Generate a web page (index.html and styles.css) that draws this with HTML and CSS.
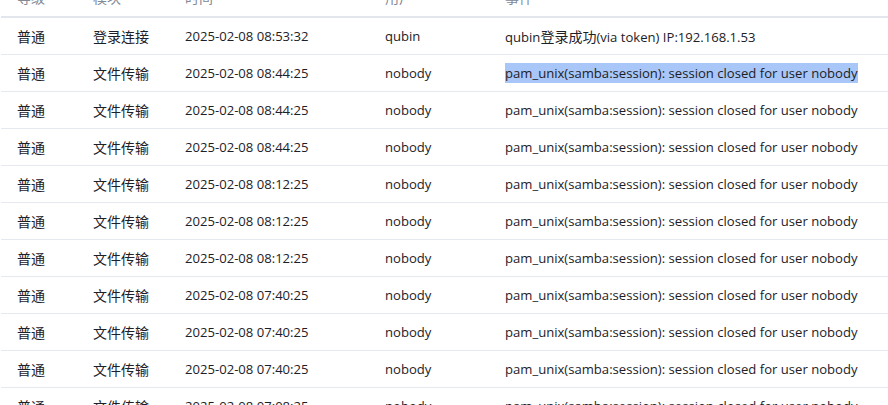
FILE: index.html
```html
<!DOCTYPE html>
<html>
<head>
<meta charset="utf-8">
<link rel="stylesheet" href="styles.css">
</head>
<body>
<div class="wrap">
<table class="log">
<colgroup><col class="c1"><col class="c2"><col class="c3"><col class="c4"><col class="c5"></colgroup>
<thead>
<tr><th><span class="h">等级</span></th><th><span class="h">模块</span></th><th><span class="h">时间</span></th><th><span class="h">用户</span></th><th><span class="h">事件</span></th></tr>
</thead>
<tbody>
<tr><td class="zh">普通</td><td class="zh">登录连接</td><td>2025-02-08 08:53:32</td><td>qubin</td><td>qubin<span class="zh">登录成功</span>(via token) IP:192.168.1.53</td></tr>
<tr><td class="zh">普通</td><td class="zh">文件传输</td><td>2025-02-08 08:44:25</td><td>nobody</td><td><span class="sel">pam_unix(samba:session): session closed for user nobody</span></td></tr>
<tr><td class="zh">普通</td><td class="zh">文件传输</td><td>2025-02-08 08:44:25</td><td>nobody</td><td>pam_unix(samba:session): session closed for user nobody</td></tr>
<tr><td class="zh">普通</td><td class="zh">文件传输</td><td>2025-02-08 08:44:25</td><td>nobody</td><td>pam_unix(samba:session): session closed for user nobody</td></tr>
<tr><td class="zh">普通</td><td class="zh">文件传输</td><td>2025-02-08 08:12:25</td><td>nobody</td><td>pam_unix(samba:session): session closed for user nobody</td></tr>
<tr><td class="zh">普通</td><td class="zh">文件传输</td><td>2025-02-08 08:12:25</td><td>nobody</td><td>pam_unix(samba:session): session closed for user nobody</td></tr>
<tr><td class="zh">普通</td><td class="zh">文件传输</td><td>2025-02-08 08:12:25</td><td>nobody</td><td>pam_unix(samba:session): session closed for user nobody</td></tr>
<tr><td class="zh">普通</td><td class="zh">文件传输</td><td>2025-02-08 07:40:25</td><td>nobody</td><td>pam_unix(samba:session): session closed for user nobody</td></tr>
<tr><td class="zh">普通</td><td class="zh">文件传输</td><td>2025-02-08 07:40:25</td><td>nobody</td><td>pam_unix(samba:session): session closed for user nobody</td></tr>
<tr><td class="zh">普通</td><td class="zh">文件传输</td><td>2025-02-08 07:40:25</td><td>nobody</td><td>pam_unix(samba:session): session closed for user nobody</td></tr>
<tr><td class="zh">普通</td><td class="zh">文件传输</td><td>2025-02-08 07:08:25</td><td>nobody</td><td>pam_unix(samba:session): session closed for user nobody</td></tr>
</tbody>
</table>
</div>
</body>
</html>
```

FILE: styles.css
```css
html, body {
  margin: 0;
  padding: 0;
  background: #fff;
  overflow: hidden;
}
.wrap {
  margin-top: -22px;
  padding-left: 1px;
}
.log {
  border-collapse: collapse;
  table-layout: fixed;
  width: 887px;
  font-family: "Open Sans", "Noto Sans CJK SC", sans-serif;
  font-size: 13.1px;
  line-height: 18px;
  color: #1d2127;
}
.c1 { width: 76px; }
.c2 { width: 92px; }
.c3 { width: 200px; }
.c4 { width: 120px; }
.c5 { width: auto; }
.log th {
  height: 38px;
  padding: 0 16px;
  text-align: left;
  font-weight: normal;
  font-family: "Noto Sans CJK SC", sans-serif;
  font-size: 14px;
  color: #838a96;
  border-bottom: 2px solid #e3e7ed;
  position: relative;
  vertical-align: middle;
}
.log th + th::before {
  content: "";
  position: absolute;
  left: 0;
  top: 8px;
  bottom: 17px;
  width: 1px;
  background: #dfe2e7;
}
.log td {
  height: 36px;
  padding: 0 16px;
  border-bottom: 1px solid #e6e9ef;
  white-space: nowrap;
  vertical-align: middle;
}
.zh {
  font-family: "Noto Sans CJK SC", sans-serif;
  font-size: 14px;
  line-height: 18px;
}
.sel {
  background: #a8c6f7;
  padding: 1px 0;
}
```
